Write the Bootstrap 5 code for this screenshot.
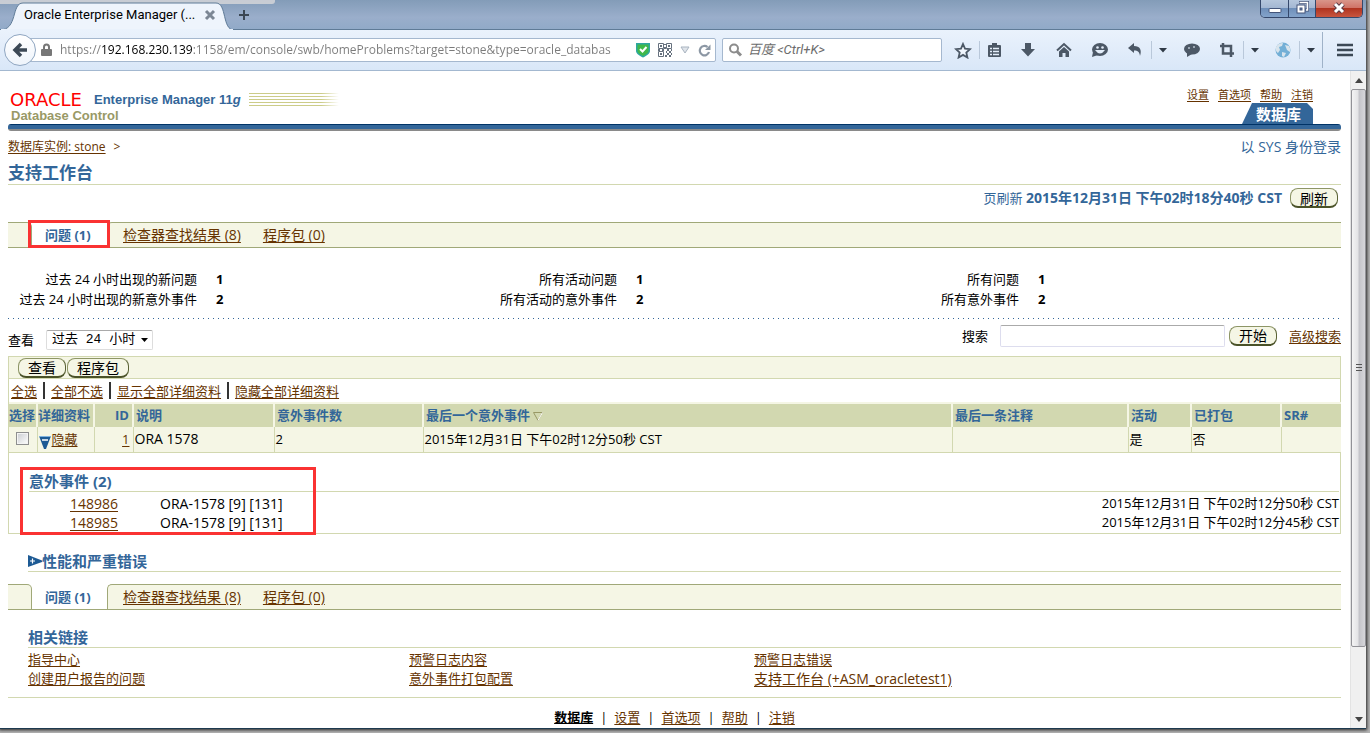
<!DOCTYPE html>
<html lang="zh-CN">
<head>
<meta charset="utf-8">
<meta name="viewport" content="width=device-width, initial-scale=1">
<title>Oracle Enterprise Manager (SYS) - 支持工作台</title>
<link href="https://cdn.jsdelivr.net/npm/bootstrap@5.3.0/dist/css/bootstrap.min.css" rel="stylesheet">
<style>
:root{--blue:#336699;--olive:#999966;--sand:#d2d8b0;--cream:#f5f6e5;--brown:#663300;--edge:#a0a878;--toolline:#a3b8d0}
body{font:13px/20px "Open Sans","Noto Sans CJK SC",sans-serif;color:#000;background:#b4b4b4;height:100vh;overflow:hidden;padding:0 4px 4px 0}
svg{display:block;flex:none}
button{font-family:inherit;color:inherit}
.shell{height:100%;background:#fff;box-shadow:0 0 3px 1px #222;border-bottom:1px solid #1d3a50}
.wide{font-size:14px}
/* window frame */
header{font-family:Roboto,"Noto Sans CJK SC",sans-serif}
.titlebar{height:30px;background:linear-gradient(#839cb8,#9aaecb 60%,#91aac8);border-bottom:1px solid #5f7b97}
.behind-l{left:0;top:0;width:275px;height:4px;background:#d3d5d8;border-radius:0 0 3px 0;opacity:.85}
.browsertab{width:234px;height:30px;margin-bottom:-1px}
.browsertab svg.shape{left:0;top:0}
.tabname{width:180px}
.plain{background:none;border:0;padding:0}
.winbtns{height:18px;border:1px solid #35486b;border-top:0;border-radius:0 0 5px 5px;overflow:hidden;margin-right:3px}
.winbtns button{width:27px;border:0;padding:0;height:17px;display:flex;justify-content:center;background:linear-gradient(#b5c6dc,#a2b6d2 50%,#6f8fb9 50%,#83a3cb)}
.winbtns button+button{border-left:1px solid #35486b}
.winbtns .shut{width:47px;background:linear-gradient(#d9968a,#cf7063 50%,#b03420 50%,#c8553f)}
.toolbar{height:41px;background:linear-gradient(#eaf2fc,#d9e7f8);border-bottom:1px solid var(--toolline);padding:0 3px 0 4px}
.backbtn{width:32px;height:32px;border:1px solid #8fa6c1;border-radius:50%;background:linear-gradient(#fff,#eef4fb);padding:0;z-index:1}
.fieldbox{height:24px;background:#fff;border:1px solid #a5b8cf;border-radius:2px}
.urlbar{margin-left:-14px;padding-left:18px}
.fieldbox input{border:0;outline:0;background-color:transparent;padding:0;min-width:0}
.urlbar input{font:12px/20px "Open Sans",sans-serif;color:transparent;background-image:linear-gradient(90deg,#7b7b7b 41px,#000 41px,#000 133px,#7b7b7b 133px);-webkit-background-clip:text;background-clip:text}
.searchbar{width:220px;margin-left:6px}
.searchbar input::placeholder{font-style:italic;color:#6c6c6c;opacity:1}
.tb{background:none;border:0;padding:0;width:36px;height:28px;display:flex;align-items:center;justify-content:center;color:#4c5866}
.tb.side{width:30px}.tb.half{width:33px}.tb.arrow{width:22px}
.rule{width:1px;height:18px;background:#b9c8da}
.rule.tall{height:36px;background:#9fb2c8}
/* scroll bar */
.scroller{flex:none;width:16px;background:#f0f0f0;border-left:1px solid #e3e3e3}
.scroller button{height:18px;width:100%;display:flex;align-items:center;justify-content:center}
.scroller .thumb{flex:0 1 558px;border:1px solid #929297;border-radius:2px;background:linear-gradient(90deg,#f4f4f4,#e4e4e6 45%,#c4c4c9 55%,#d6d6da)}
/* page */
.pagebody{padding:0 9px 0 8px;min-width:0;overflow:hidden}
a{color:var(--brown);text-decoration:underline;text-underline-offset:2px}
.masthead{height:53px}
.brand-red{font:18px/17px "DejaVu Sans",sans-serif;color:#f00;width:82px;padding-left:2px}
.brand-blue{font:bold 13px/17px "Liberation Sans",sans-serif;color:var(--blue)}
.brand-olive{font:bold 13px/15px "Liberation Sans",sans-serif;color:var(--olive);padding-left:3px}
.stripes{width:90px;height:13px;background:repeating-linear-gradient(#cccc88 0 1px,#fff 1px 3px);-webkit-mask-image:linear-gradient(90deg,#000 80%,transparent)}
.toplinks{font-size:11px;line-height:16px;gap:9px;padding-right:28px}
.dbtab{width:71px;height:21px;margin-right:28px;font:bold 15px/21px "Noto Sans CJK SC",sans-serif;color:#fff;text-decoration:none;background:var(--blue);clip-path:polygon(10px 0,65px 0,71px 6px,71px 100%,0 100%);padding-left:14px}
.bluebar{height:7px;background:linear-gradient(#003366 1px,var(--blue) 1px,var(--blue) 5px,#8a8a8a 5px);border-radius:3px}
.ink{color:var(--blue)}
.crumbs{padding-top:6px}
.crumbs .trail{font-size:12px;color:var(--brown)}
h1{font-size:17px;line-height:23px;font-weight:700;color:var(--blue);border-bottom:1px solid var(--sand);margin:4px 0 0}
h2{font-size:15px;line-height:19px;font-weight:700;color:var(--blue);border-bottom:1px solid var(--sand);margin:0}
.refresh{padding:3px 3px 14px 0}
.pill{height:20px;min-width:48px;padding:0 9px;font:14px/16px "Noto Sans CJK SC",sans-serif;background:var(--cream);border:1px solid #8d9566;border-bottom:2px solid #4a5228;border-right-color:#5a6235;border-radius:8px}
.subtabs{height:26px}
.subtabs>*{border:1px solid var(--edge);border-width:1px 0;background:var(--cream)}
.subtabs .lead-in{width:24px;border-right-width:1px;border-top-right-radius:5px}
.subtabs .current{width:75px;background:#fff;border-top-color:transparent;color:var(--blue);font-weight:700;line-height:24px;padding-left:13px}
.subtabs .others{border-left-width:1px;border-top-left-radius:5px;gap:22px;padding-left:15px;line-height:24px;font-size:14px}
.marker{position:absolute;border:3px solid #fa3232;pointer-events:none}
.marker.m-tab{left:20px;top:-2px;width:82px;height:28px}
.marker.m-inc{left:11px;top:14px;width:296px;height:68px}
.tally{display:grid;grid-template-columns:208fr 12fr 408fr 12fr 390fr 303fr;margin-top:21px;white-space:nowrap}
.tally dt{font-weight:400;text-align:right;padding-right:19px}
.tally dd{margin:0;font-weight:700}
.dots{height:1px;margin-top:9px;background:repeating-linear-gradient(90deg,var(--blue) 0 1px,#fff 1px 5px)}
.filters{height:37px}
.filters .period{padding-bottom:6px}
.viewsel{width:107px;height:20px;border:1px solid #ddd;border-top-color:#aaa;border-radius:2px;font:13px/18px "Liberation Mono","Noto Sans CJK SC",monospace;appearance:none;padding:0 0 0 5px;background:#fff}
.viewwrap svg{right:5px;top:8px}
.findbox{width:225px;height:22px;border:1px solid #dde;border-top-color:#aaa;border-radius:2px;padding:0 4px}
.grid{border:1px solid var(--sand)}
.gridbar{height:22px;background:var(--cream);border-bottom:1px solid var(--sand);padding-left:9px;gap:1px}
.picks{height:23px;padding-left:2px;gap:6px;line-height:26px}
.picks i{width:2px;height:17px;background:#333}
.problems{table-layout:fixed;width:calc(100% + 1px)}
.problems th,.problems td{padding:0 0 0 2px;white-space:nowrap;font-weight:400}
.problems th{height:23px;line-height:20px;background:var(--sand);color:var(--blue);font-weight:700;border-top:2px solid var(--cream);border-left:2px solid var(--cream)}
.problems td{height:26px;background:var(--cream);border:solid var(--sand);border-width:1px 0 1px 1px;padding:0 0 1px 1px}
.problems th:first-child,.problems td:first-child{border-left:0;padding-left:0}
.problems .num{text-align:right;padding-right:3px}
.problems input{width:13px;height:13px;margin:0 0 0 7px;display:block;appearance:none;border:1px solid #8e8f8f;background:linear-gradient(135deg,#c9ccd0,#fff);box-shadow:inset 0 0 0 1px #f4f4f4}
.incidents{padding:19px 1px 1px 20px}
.incidents table{margin-top:2px;line-height:19px}
.incidents td{padding:0}
.incidents .what{padding-left:42px}
.sect{margin:18px 0 0 20px}
.second{margin-top:12px}
.links3{display:grid;grid-template-columns:381fr 345fr 587fr;line-height:19px;margin:2px 0 0 20px}
.links3 a{justify-self:start}
.endline{margin:9px 0 0;border-top:1px solid var(--sand);opacity:1}
.foot{gap:7px;margin-top:9px}
</style>
</head>
<body>
<div class="shell d-flex flex-column">
  <header>
    <div class="titlebar d-flex justify-content-between position-relative">
      <div class="behind-l position-absolute"></div>
      <div class="d-flex">
        <div class="browsertab position-relative d-flex align-items-center">
          <svg class="shape position-absolute" width="234" height="30"><path d="M0 30C18 30 11 3 23 3H216C227 3 222 30 234 30Z" fill="#eef4fc" stroke="#5f7b97"/><path d="M1 30H233" stroke="#eaf2fc" stroke-width="2"/></svg>
          <span class="tabname position-relative ms-4 text-nowrap">Oracle Enterprise Manager (...</span>
          <button class="plain position-relative" aria-label="关闭标签页"><svg width="12" height="12"><path d="M2 2L10 10M10 2L2 10" stroke="#7c8794" stroke-width="3"/></svg></button>
        </div>
        <button class="plain px-1" aria-label="新标签页"><svg width="12" height="12"><path d="M6 1V11M1 6H11" stroke="#3b4754" stroke-width="2"/></svg></button>
      </div>
      <div class="winbtns d-flex align-self-start">
        <button aria-label="最小化"><svg width="14" height="16"><rect x="1" y="8.500" width="12" height="4" rx="1" fill="#fff" stroke="#44557a"/></svg></button>
        <button aria-label="还原"><svg width="14" height="16"><path d="M4 2.500H13V10H10.500" fill="none" stroke="#44557a" stroke-width="3"/><path d="M4.500 2.500H12.500V10H11" fill="none" stroke="#fff" stroke-width="1.500"/><rect x="2" y="5" width="8" height="8" fill="#fff" stroke="#44557a"/><rect x="5" y="8" width="2" height="2" fill="#6f8fb9" stroke="#44557a"/></svg></button>
        <button class="shut" aria-label="关闭"><svg width="14" height="15"><path d="M3 4L11 12M11 4L3 12" stroke="#5a3b46" stroke-width="5"/><path d="M3 4L11 12M11 4L3 12" stroke="#fff" stroke-width="3"/></svg></button>
      </div>
    </div>
    <div class="toolbar d-flex align-items-center">
      <button class="backbtn d-flex align-items-center justify-content-center position-relative" aria-label="后退"><svg width="16" height="16"><path d="M9 2L3 8L9 14M3 8H15" fill="none" stroke="#3c4956" stroke-width="3.500"/></svg></button>
      <div class="fieldbox urlbar d-flex align-items-center flex-grow-1">
        <svg width="11" height="14"><path d="M3 7V4A2.500 2.500 0 0 1 8 4V7" fill="none" stroke="#777" stroke-width="2"/><rect x="0" y="6" width="11" height="7" rx="1" fill="#777"/></svg>
        <input class="flex-grow-1 ms-2" type="text" aria-label="地址" value="https://192.168.230.139:1158/em/console/swb/homeProblems?target=stone&amp;type=oracle_databas">
        <svg class="ms-2" width="14" height="16"><path d="M0 1H14V9C14 12 10 14 7 15.500C4 14 0 12 0 9Z" fill="#2ea7a0"/><path d="M1.500 2.500H12.500V9C12.500 11 9 13 7 14C5 13 1.500 11 1.500 9Z" fill="#3fb84a"/><path d="M4 7L6.500 9.500L10.500 5" fill="none" stroke="#fff" stroke-width="2"/></svg>
        <svg class="ms-2" width="14" height="14" fill="none" stroke="#66717e"><path d="M.5.5H5.500V5.500H.5ZM8.500.5H13.500V5.500H8.500ZM.5 8.500H5.500V13.500H.5Z"/><path d="M2 3H4M10 3H12M2 11H4M7 1V2M7 4V6M0 7H2M4 7H6M9 7H11M13 7H14M8 9H9M11 9H13M9 11H11M13 11H14M7 13H9M11 13H13" stroke-width="2"/></svg>
        <svg class="ms-2" width="10" height="8"><path d="M1 1H9L5 7Z" fill="#dfe4ea" stroke="#a9b4c0"/></svg>
        <svg class="ms-2 me-1" width="13" height="13"><path d="M9.500 3A4.700 4.700 0 1 0 11 8" fill="none" stroke="#8c97a4" stroke-width="2.200"/><path d="M7 6H12.500V.5Z" fill="#8c97a4"/></svg>
      </div>
      <div class="fieldbox searchbar d-flex align-items-center">
        <svg class="ms-1" width="17" height="14"><circle cx="7" cy="5.500" r="4" fill="none" stroke="#8c8c8c" stroke-width="2"/><path d="M10 8.500L14 12.500" stroke="#8c8c8c" stroke-width="3"/></svg>
        <input class="flex-grow-1 ms-1" type="text" aria-label="搜索" placeholder="百度 &lt;Ctrl+K&gt;">
      </div>
      <div class="d-flex align-items-center ps-1">
        <button class="tb half" aria-label="收藏"><svg width="18" height="17"><path d="M9 2L11 6.700L16 7.200L12.300 10.500L13.400 15.500L9 12.900L4.600 15.500L5.700 10.500L2 7.200L7 6.700Z" fill="#fff" fill-opacity=".5" stroke="currentColor" stroke-width="1.800"/></svg></button>
        <span class="rule"></span>
        <button class="tb side" aria-label="书签"><svg width="16" height="16"><rect x="1" y="3" width="13" height="12" rx="1" fill="#4c5866"/><path d="M5 1H10V4H5Z" fill="currentColor"/><path d="M3 6.500H5M6 6.500H12M3 9.500H5M6 9.500H12M3 12.500H5M6 12.500H12" stroke="#e4eefa" stroke-width="1.500"/></svg></button>
        <button class="tb" aria-label="下载"><svg width="16" height="16"><path d="M5 1H11V7H15L8 14.500L1 7H5Z" fill="currentColor"/></svg></button>
        <button class="tb" aria-label="主页"><svg width="16" height="16"><path d="M1 8.500L8 2L15 8.500" fill="none" stroke="currentColor" stroke-width="2"/><path d="M3 9.500L8 5L13 9.500V15H9.500V11H6.500V15H3Z" fill="currentColor"/></svg></button>
        <button class="tb" aria-label="表情"><svg width="18" height="16"><ellipse cx="9" cy="7.500" rx="8" ry="6.500" fill="currentColor"/><path d="M2 10L1 15L7 13Z" fill="currentColor"/><circle cx="6.500" cy="5.500" r="1.300" fill="#e4eefa"/><circle cx="11.500" cy="5.500" r="1.300" fill="#e4eefa"/><path d="M4 8H14Q9 15 4 8Z" fill="#e4eefa"/></svg></button>
        <button class="tb half" aria-label="撤销"><svg width="16" height="16"><path d="M1 6L7 1V4C13 4 15 8 13 14C12.500 10 11 8.500 7 8.500V11Z" fill="currentColor"/></svg></button>
        <span class="rule"></span>
        <button class="tb arrow" aria-label="更多撤销"><svg width="8" height="5"><path d="M0 0H8L4 4.500Z" fill="#2f3a46"/></svg></button>
        <button class="tb" aria-label="消息"><svg width="18" height="16"><ellipse cx="9" cy="7" rx="8" ry="5.500" fill="currentColor"/><path d="M4 10L4 15L9 12Z" fill="currentColor"/><circle cx="6" cy="6" r="1" fill="#b7c3d0"/><circle cx="11" cy="5" r="1" fill="#b7c3d0"/></svg></button>
        <button class="tb half" aria-label="截图"><svg width="16" height="16"><path d="M4 1V11.500H15M1 4H12V15" fill="none" stroke="currentColor" stroke-width="2.500"/></svg></button>
        <span class="rule"></span>
        <button class="tb arrow" aria-label="更多截图"><svg width="8" height="5"><path d="M0 0H8L4 4.500Z" fill="#2f3a46"/></svg></button>
        <button class="tb half" aria-label="网络"><svg width="18" height="18"><circle cx="9" cy="9" r="7.500" fill="#73afd6"/><path d="M2 6Q4 2 9 2L8 5L5 6L6 9L4 12Q1 10 2 6ZM11 4L15 5Q17 8 16 11L13 9ZM8 11L12 12L10 16L8 15Z" fill="#d9e4ec"/></svg></button>
        <span class="rule"></span>
        <button class="tb arrow" aria-label="更多网络"><svg width="8" height="5"><path d="M0 0H8L4 4.500Z" fill="#2f3a46"/></svg></button>
        <span class="rule tall"></span>
        <button class="tb ms-1" aria-label="菜单"><svg width="16" height="14"><path d="M0 2H16M0 7H16M0 12H16" stroke="#3c4956" stroke-width="2.600"/></svg></button>
      </div>
    </div>
  </header>

  <div class="d-flex flex-grow-1 overflow-hidden">
    <main class="pagebody flex-grow-1">
      <div class="masthead d-flex justify-content-between">
        <div class="pt-3">
          <div class="d-flex align-items-center pt-1"><span class="brand-red">ORACLE</span><span class="brand-blue ps-1">Enterprise Manager 11<em>g</em></span><span class="stripes ms-2"></span></div>
          <div class="brand-olive">Database Control</div>
        </div>
        <div class="d-flex flex-column align-items-end justify-content-end">
          <nav class="toplinks d-flex"><a href="#">设置</a><a href="#">首选项</a><a href="#">帮助</a><a href="#">注销</a></nav>
          <a class="dbtab" href="#">数据库</a>
        </div>
      </div>
      <div class="bluebar"></div>
      <div class="crumbs d-flex justify-content-between">
        <div class="trail"><a href="#">数据库实例: stone</a><span class="ps-2">&gt;</span></div>
        <div class="ink wide">以 SYS 身份登录</div>
      </div>
      <h1>支持工作台</h1>
      <div class="refresh d-flex justify-content-end align-items-center ink">
        <span>页刷新 <b class="wide">2015年12月31日 下午02时18分40秒 CST</b></span><button class="pill text-black ms-2">刷新</button>
      </div>
      <nav class="subtabs d-flex position-relative">
        <span class="lead-in"></span><span class="current">问题 (1)</span>
        <div class="others d-flex flex-grow-1"><a href="#">检查器查找结果 (8)</a><a href="#">程序包 (0)</a></div>
        <div class="marker m-tab bg-transparent"></div>
      </nav>
      <dl class="tally mb-0">
        <dt>过去 24 小时出现的新问题</dt><dd>1</dd><dt>所有活动问题</dt><dd>1</dd><dt>所有问题</dt><dd>1</dd>
        <dt>过去 24 小时出现的新意外事件</dt><dd>2</dd><dt>所有活动的意外事件</dt><dd>2</dd><dt>所有意外事件</dt><dd>2</dd>
      </dl>
      <div class="dots"></div>
      <div class="filters d-flex justify-content-between">
        <div class="period d-flex align-items-end">
          <label for="period">查看</label>
          <div class="viewwrap position-relative ms-2 ps-1"><select id="period" class="viewsel d-block"><option>过去 24 小时</option></select><svg class="position-absolute" width="7" height="4"><path d="M0 0H7L3.500 4Z"/></svg></div>
        </div>
        <div class="d-flex align-items-center pb-1">
          <label for="find" class="me-2 pe-1">搜索</label><input id="find" class="findbox" type="text"><button class="pill ms-1">开始</button><a href="#" class="ps-2 ms-1">高级搜索</a>
        </div>
      </div>
      <section class="grid">
        <div class="gridbar d-flex align-items-center"><button class="pill">查看</button><button class="pill">程序包</button></div>
        <div class="picks d-flex align-items-center"><a href="#">全选</a><i></i><a href="#">全部不选</a><i></i><a href="#">显示全部详细资料</a><i></i><a href="#">隐藏全部详细资料</a></div>
        <table class="problems">
          <colgroup><col style="width:28px"><col style="width:57px"><col style="width:39px"><col style="width:141px"><col style="width:149px"><col><col style="width:176px"><col style="width:63px"><col style="width:90px"><col style="width:60px"></colgroup>
          <thead><tr><th>选择</th><th class="ps-0">详细资料</th><th class="num">ID</th><th>说明</th><th>意外事件数</th><th>最后一个意外事件 <svg class="d-inline" width="10" height="9"><path d="M.5.5H9.500L5 8.500Z" fill="none" stroke="#999966"/><path d="M9.500.5L5 8.500" stroke="#fff"/></svg></th><th>最后一条注释</th><th>活动</th><th>已打包</th><th>SR#</th></tr></thead>
          <tbody><tr><td><input type="checkbox" aria-label="选择问题 1"></td><td><div class="d-flex align-items-center"><svg class="mt-2" width="13" height="14"><path d="M0 0H12L7 13H5Z" fill="#1d5a94"/><path d="M0 .5H12" stroke="#7fb3df"/><path d="M3 4H9" stroke="#fff" stroke-width="1.500"/></svg><a href="#">隐藏</a></div></td><td class="num"><a href="#">1</a></td><td class="wide">ORA 1578</td><td>2</td><td>2015年12月31日 下午02时12分50秒 CST</td><td></td><td>是</td><td>否</td><td></td></tr></tbody>
        </table>
        <div class="incidents position-relative">
          <h2>意外事件 (2)</h2>
          <table class="w-100">
            <colgroup><col style="width:89px"><col><col></colgroup>
            <tr><td class="text-end wide"><a href="#">148986</a></td><td class="what wide">ORA-1578 [9] [131]</td><td class="text-end">2015年12月31日 下午02时12分50秒 CST</td></tr>
            <tr><td class="text-end wide"><a href="#">148985</a></td><td class="what wide">ORA-1578 [9] [131]</td><td class="text-end">2015年12月31日 下午02时12分45秒 CST</td></tr>
          </table>
          <div class="marker m-inc"></div>
        </div>
      </section>
      <h2 class="sect d-flex align-items-center"><svg width="14" height="12"><path d="M0 0L14 5.500V7L0 12Z" fill="#1d5a94"/><path d="M2 6H7M4.500 3.500V8.500" stroke="#fff" stroke-width="1.200"/></svg><span>性能和严重错误</span></h2>
      <nav class="subtabs second d-flex">
        <span class="lead-in"></span><span class="current">问题 (1)</span>
        <div class="others d-flex flex-grow-1"><a href="#">检查器查找结果 (8)</a><a href="#">程序包 (0)</a></div>
      </nav>
      <h2 class="sect">相关链接</h2>
      <div class="links3"><a href="#">指导中心</a><a href="#">预警日志内容</a><a href="#">预警日志错误</a><a href="#">创建用户报告的问题</a><a href="#">意外事件打包配置</a><a href="#" class="wide">支持工作台 (+ASM_oracletest1)</a></div>
      <hr class="endline">
      <footer class="foot d-flex justify-content-center"><b><u>数据库</u></b>|<a href="#">设置</a>|<a href="#">首选项</a>|<a href="#">帮助</a>|<a href="#">注销</a></footer>
    </main>
    <div class="scroller d-flex flex-column">
      <button class="plain" aria-label="向上"><svg width="8" height="5"><path d="M0 5H8L4 0Z" fill="#444"/></svg></button>
      <div class="thumb d-flex align-items-center justify-content-center"><svg width="6" height="8"><path d="M0 .5H6M0 3.500H6M0 6.500H6" stroke="#555"/></svg></div>
      <button class="plain mt-auto" aria-label="向下"><svg width="8" height="5"><path d="M0 0H8L4 5Z" fill="#444"/></svg></button>
    </div>
  </div>
</div>
<script src="https://cdn.jsdelivr.net/npm/bootstrap@5.3.0/dist/js/bootstrap.bundle.min.js"></script>
</body>
</html>
